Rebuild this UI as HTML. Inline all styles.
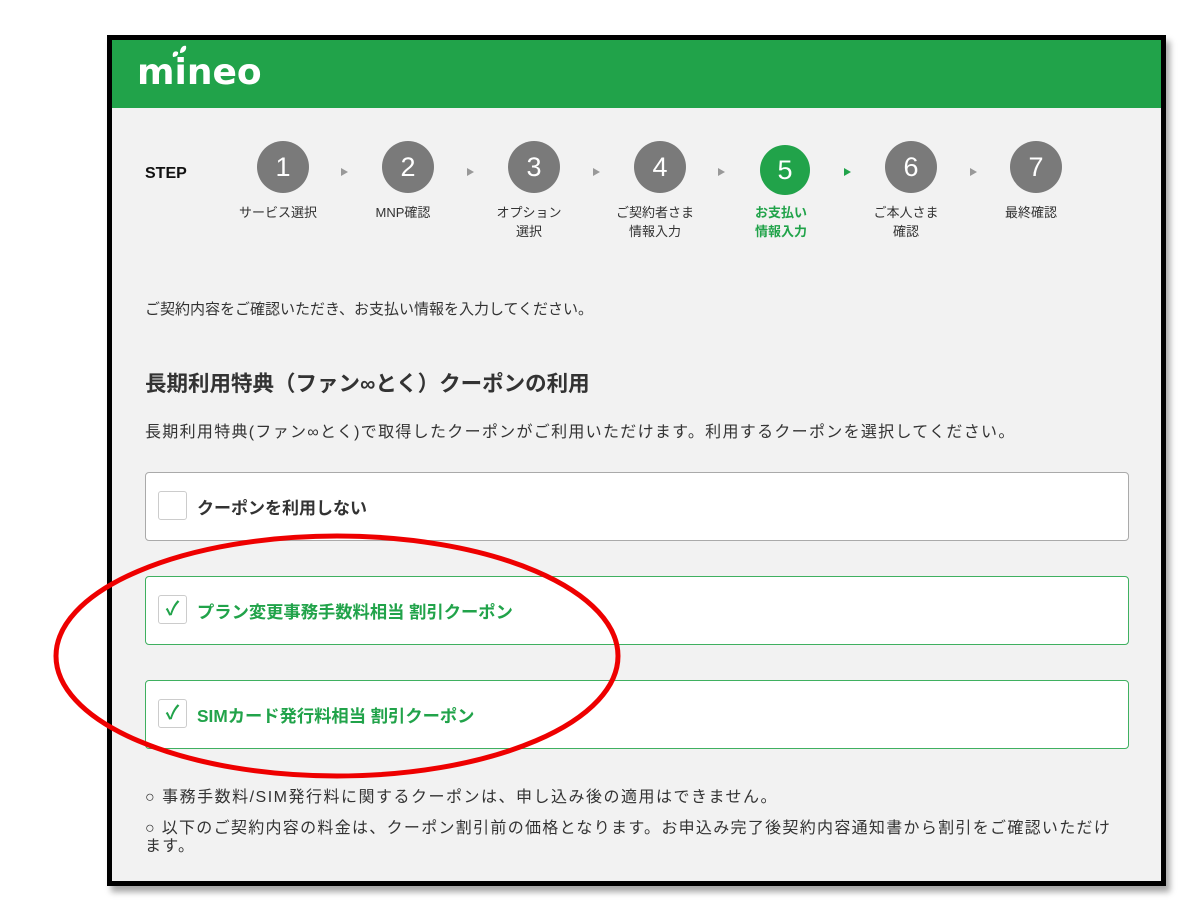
<!DOCTYPE html>
<html><head><meta charset="utf-8"><style>
body{margin:0;width:1202px;height:922px;background:#fff;position:relative;overflow:hidden;font-family:"Liberation Sans","Noto Sans CJK JP",sans-serif;}
.frame{position:absolute;left:107px;top:35px;width:1049px;height:841px;border:5px solid #000;background:#f2f2f2;box-shadow:4px 6px 6px rgba(0,0,0,.35);}
.hdr{position:absolute;left:0;top:0;width:100%;height:68px;background:#21a34a;}
.logo{position:absolute;left:25px;top:12px;color:#fff;font-weight:bold;font-size:36px;font-family:"DejaVu Sans",sans-serif;}
.a{position:absolute;}
.c{position:absolute;width:52px;height:52px;border-radius:50%;background:#7a7a7a;color:#fff;font-size:27px;text-align:center;line-height:52px;}
.l{position:absolute;width:110px;text-align:center;font-size:13px;color:#333;line-height:19px;}
.ar{position:absolute;width:0;height:0;border-left:7px solid #999;border-top:4px solid transparent;border-bottom:4px solid transparent;}
.box{position:absolute;left:33px;width:982px;height:67px;background:#fff;border:1px solid #aaa;border-radius:4px;}
.box.g{border-color:#3fb060;}
.cb{position:absolute;left:12px;top:18px;width:27px;height:27px;border:1px solid #ccc;border-radius:3px;background:#fff;color:#21a34a;font-size:19px;text-align:center;line-height:27px;font-weight:bold;}
.bt{position:absolute;left:51px;top:21px;font-size:17px;font-weight:bold;color:#333;}
.g .bt{color:#21a34a;font-size:17.3px;}
.t{position:absolute;font-size:14px;color:#333;}
</style></head><body>
<div class="frame">
<div class="hdr"><div class="logo">mineo</div>
<svg class="a" style="left:58px;top:4px" width="20" height="16"><path d="M3 13 C2 9 4 6 8 8 C9 11 6 13 3 13Z M10 9 C10 4 13 1 16 2 C17 6 14 9 10 9Z" fill="#fff"/></svg></div>
<div class="a" style="left:33px;top:125px;font-weight:bold;font-size:16px;color:#111">STEP</div>
<div class="c" style="left:145px;top:101px">1</div>
<div class="c" style="left:270px;top:101px">2</div>
<div class="c" style="left:396px;top:101px">3</div>
<div class="c" style="left:522px;top:101px">4</div>
<div class="c" style="left:648px;top:105px;background:#21a34a;width:50px;height:50px;line-height:50px">5</div>
<div class="c" style="left:773px;top:101px">6</div>
<div class="c" style="left:898px;top:101px">7</div>
<div class="ar" style="left:229px;top:128px"></div>
<div class="ar" style="left:355px;top:128px"></div>
<div class="ar" style="left:481px;top:128px"></div>
<div class="ar" style="left:606px;top:128px"></div>
<div class="ar" style="left:732px;top:128px;border-left-color:#21a34a"></div>
<div class="ar" style="left:858px;top:128px"></div>
<div class="l" style="left:111px;top:163px">サービス選択</div>
<div class="l" style="left:236px;top:163px">MNP確認</div>
<div class="l" style="left:362px;top:163px">オプション<br>選択</div>
<div class="l" style="left:488px;top:163px">ご契約者さま<br>情報入力</div>
<div class="l" style="left:614px;top:163px;color:#21a34a;font-weight:bold">お支払い<br>情報入力</div>
<div class="l" style="left:739px;top:163px">ご本人さま<br>確認</div>
<div class="l" style="left:864px;top:163px">最終確認</div>
<div class="t" style="left:33px;top:258px;font-size:15px">ご契約内容をご確認いただき、お支払い情報を入力してください。</div>
<div class="t" style="left:33px;top:327px;font-size:21.5px;font-weight:bold">長期利用特典（ファン∞とく）クーポンの利用</div>
<div class="t" style="left:33px;top:378px;font-size:16px;letter-spacing:1.3px">長期利用特典(ファン∞とく)で取得したクーポンがご利用いただけます。利用するクーポンを選択してください。</div>
<div class="box" style="top:432px"><div class="cb"></div><div class="bt">クーポンを利用しない</div></div>
<div class="box g" style="top:536px"><div class="cb">✓</div><div class="bt">プラン変更事務手数料相当 割引クーポン</div></div>
<div class="box g" style="top:640px"><div class="cb">✓</div><div class="bt">SIMカード発行料相当 割引クーポン</div></div>
<div class="t" style="left:33px;top:743px;font-size:16px;letter-spacing:1.5px">○ 事務手数料/SIM発行料に関するクーポンは、申し込み後の適用はできません。</div>
<div class="t" style="left:33px;top:780px;font-size:16px;width:972px;line-height:18px;letter-spacing:1.3px">○ 以下のご契約内容の料金は、クーポン割引前の価格となります。お申込み完了後契約内容通知書から割引をご確認いただけます。</div>
</div>
<svg class="a" style="left:0;top:0" width="1202" height="922"><ellipse cx="337" cy="656" rx="281" ry="120" fill="none" stroke="#e00" stroke-width="5"/></svg>
</body></html>
